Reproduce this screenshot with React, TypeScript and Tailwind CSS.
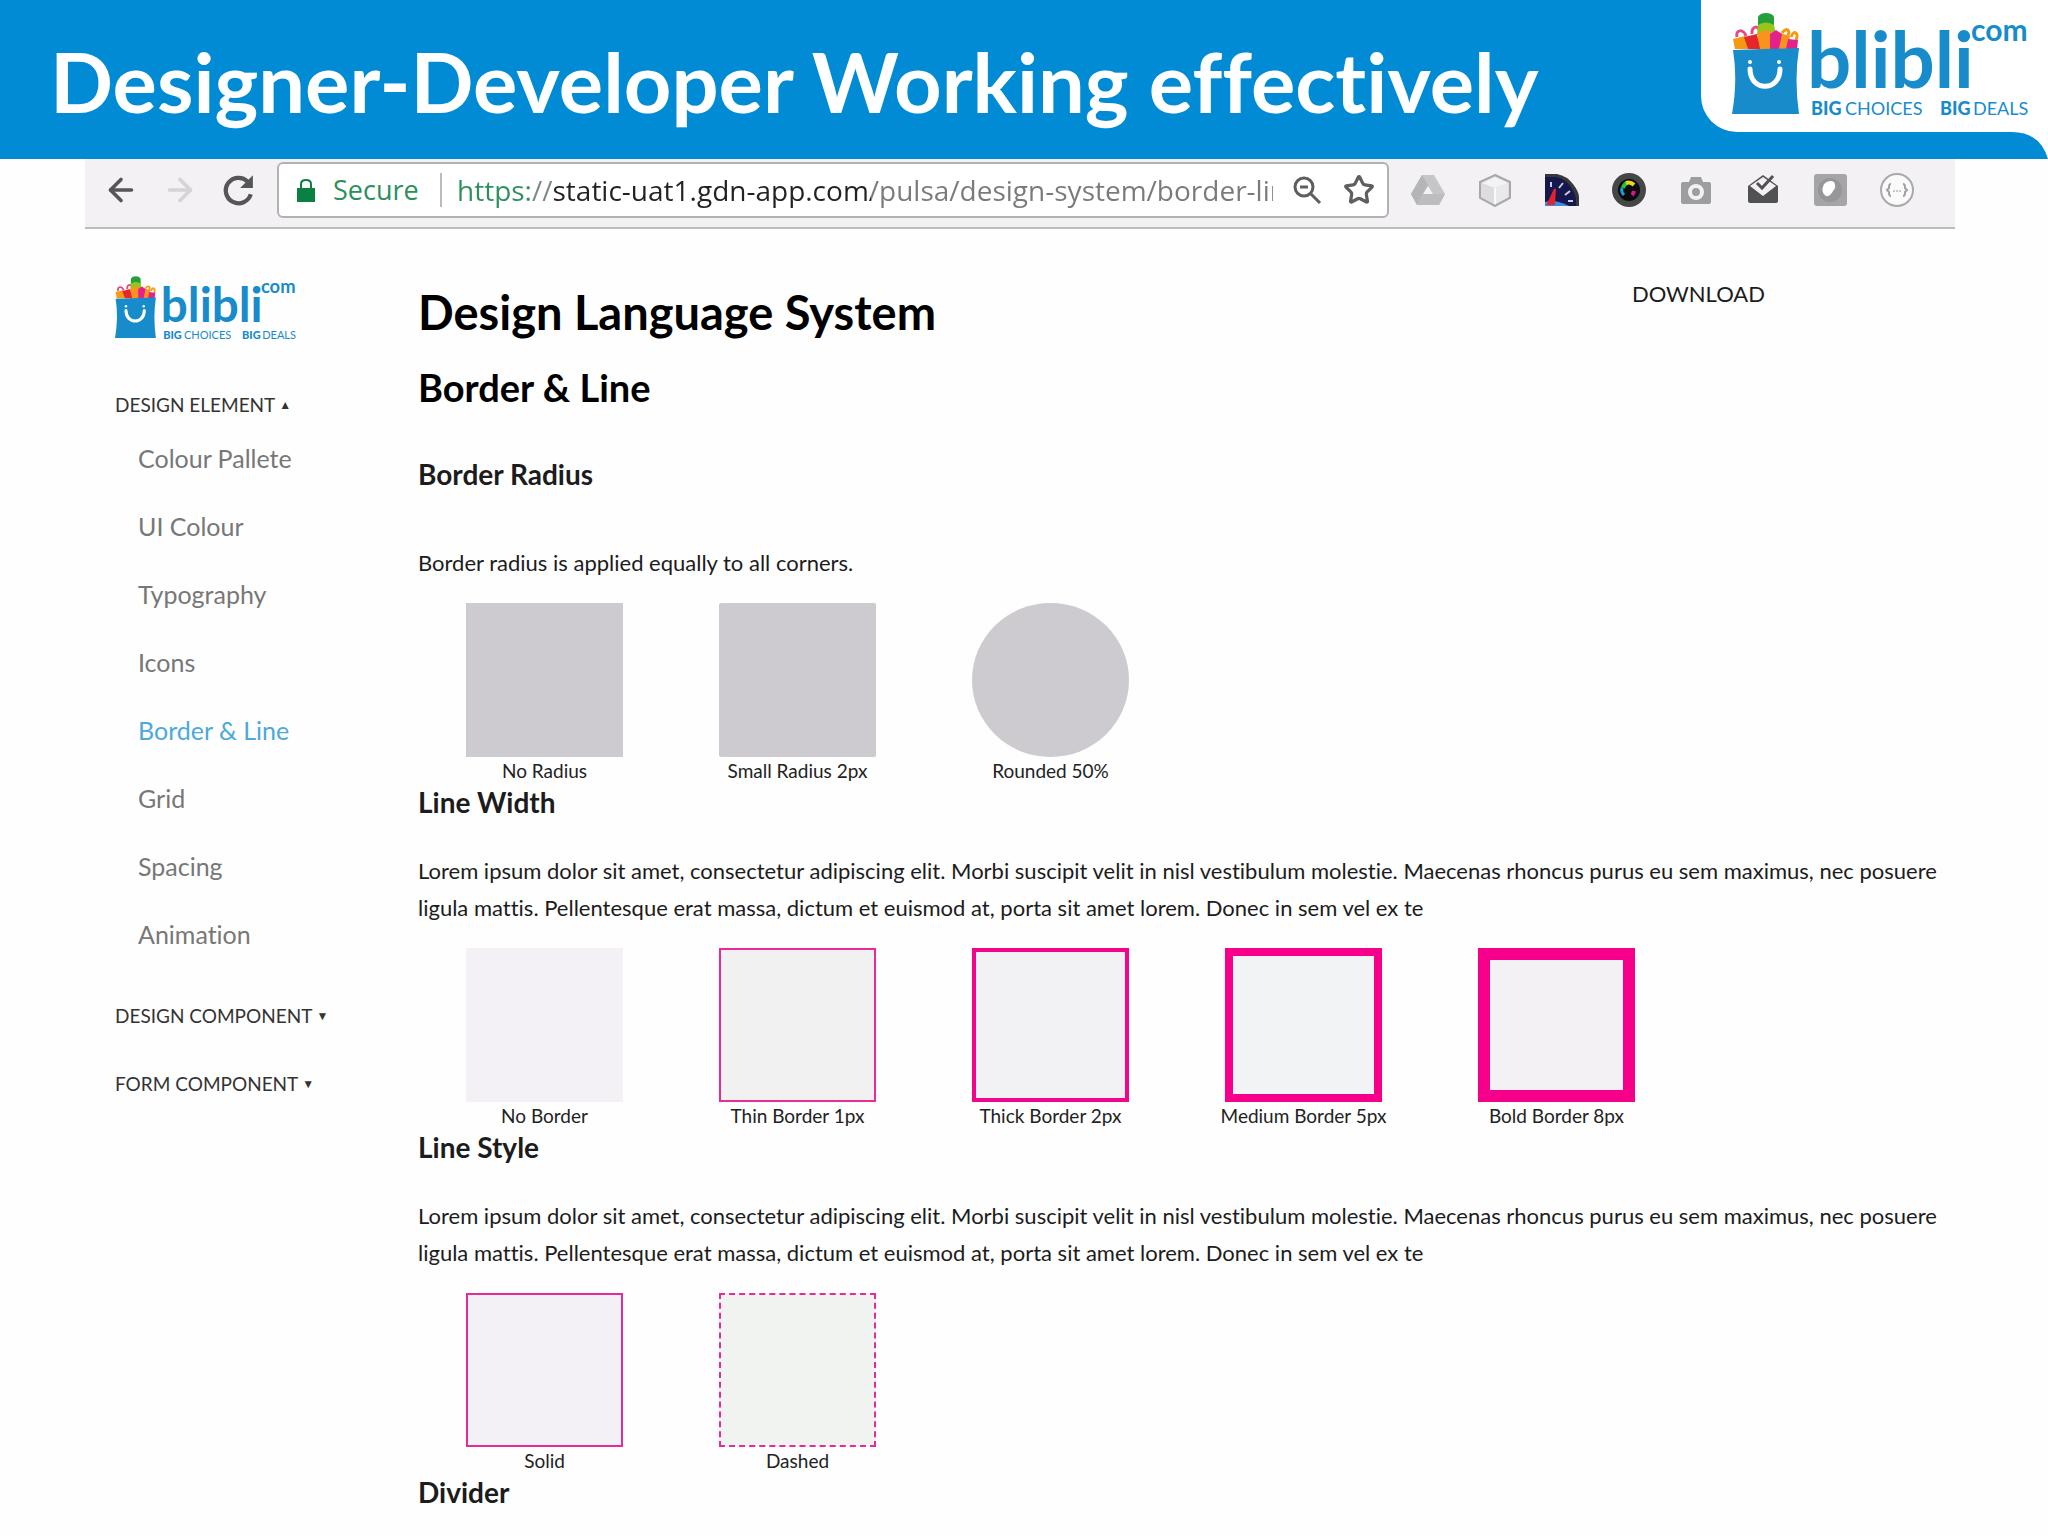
import { ArrowLeft, ArrowRight, Star } from "lucide-react";

const designElements = [
  "Colour Pallete",
  "UI Colour",
  "Typography",
  "Icons",
  "Border & Line",
  "Grid",
  "Spacing",
  "Animation",
];

const lorem =
  "Lorem ipsum dolor sit amet, consectetur adipiscing elit. Morbi suscipit velit in nisl vestibulum molestie. Maecenas rhoncus purus eu sem maximus, nec posuere ligula mattis. Pellentesque erat massa, dictum et euismod at, porta sit amet lorem. Donec in sem vel ex te";

type Swatch = { label: string; box: string };

const radiusSwatches: Swatch[] = [
  { label: "No Radius", box: "bg-[#cdcbcf]" },
  { label: "Small Radius 2px", box: "rounded-[2px] bg-[#cdcbcf]" },
  { label: "Rounded 50%", box: "rounded-[50%] bg-[#cdcbcf]" },
];

const widthSwatches: Swatch[] = [
  { label: "No Border", box: "bg-[#f3f1f5]" },
  { label: "Thin Border 1px", box: "border-2 border-[#ea2a97] bg-[#f1f1f1]" },
  { label: "Thick Border 2px", box: "border-4 border-[#f2058b] bg-[#f2f1f4]" },
  { label: "Medium Border 5px", box: "border-8 border-[#f6008b] bg-[#f1f3f4]" },
  { label: "Bold Border 8px", box: "border-[12px] border-[#f6008b] bg-[#f3f1f3]" },
];

const styleSwatches: Swatch[] = [
  { label: "Solid", box: "border-2 border-[#e62a97] bg-[#f3f1f5]" },
  { label: "Dashed", box: "border-2 border-dashed border-[#e62a97] bg-[#f1f3f1]" },
];

function Logo({ className }: { className?: string }) {
  return (
    <svg viewBox="0 0 298 104" className={`overflow-visible ${className}`} role="img" aria-label="blibli.com">
      <path d="M5 24c-2-8 7-8 9-1M20 21c-1-9 8-9 8-1" fill="none" stroke="#e8477f" strokeWidth="3" />
      <path d="M50 20c5-7 9-2 5 4M59 24c3-8 8-4 5 3" fill="none" stroke="#f39a12" strokeWidth="3" />
      <path d="M26 16L26 4Q28 0 34 0T42 4V16z" fill="#23a03a" />
      <path d="M26 12q8-5 16 0l2 10H25z" fill="#9cc31c" />
      <path d="M1 26l12-3 3 13H3z" fill="#f39a12" />
      <path d="M26 20l8-3 8 4v16H26z" fill="#f7941d" />
      <path d="M12 24l13-3 3 15H16z" fill="#e5262b" />
      <path d="M48 20l10 3-2 13h-9z" fill="#f7941d" />
      <path d="M38 21l6-4 6 4-3 15H38z" fill="#e4238a" />
      <path d="M56 26l10 1-1 9H54z" fill="#e4238a" />
      <path d="M1 37L67 35Q62 67 67 101H0Q6 67 1 37z" fill="#188bcb" />
      <path d="M18 56c0 23 30 23 30 0" fill="none" stroke="#fff" strokeWidth="5" strokeLinecap="round" />
      <circle cx="18" cy="49" r="2" fill="#fff" />
      <circle cx="47" cy="49" r="2" fill="#fff" />
      <g fill="#188bcb" className="font-['Lato',sans-serif]">
        <text x="75" y="75" fontSize="78" fontWeight="700">blibli</text>
        <text x="239" y="28" fontSize="30" fontWeight="700">com</text>
        <text x="79" y="102" fontSize="18" fontWeight="900">BIG</text>
        <text x="113" y="102" fontSize="18">CHOICES</text>
        <text x="208" y="102" fontSize="18" fontWeight="900">BIG</text>
        <text x="241" y="102" fontSize="18">DEALS</text>
      </g>
    </svg>
  );
}

function SlideHeader() {
  return (
    <header className="flex h-[159px] items-stretch justify-between bg-[#028bd5]">
      <h1 className="pt-[31px] pl-[50px] text-[83px] leading-[100px] font-bold whitespace-nowrap text-white">
        Designer-Developer Working effectively
      </h1>
      <div className="relative w-[347px] shrink-0">
        <div className="h-[132px] rounded-bl-[36px] bg-white pt-[13px] pl-[31px]">
          <Logo className="h-[104px] w-[298px]" />
        </div>
        <svg viewBox="0 0 36 27" className="absolute right-0 bottom-0 h-[27px] w-[36px]" aria-hidden="true">
          <path d="M0 0H36V27Q28 0 0 0z" fill="#fff" />
        </svg>
      </div>
    </header>
  );
}

function ExtensionIcons() {
  return (
    <div className="flex items-center gap-[33px]">
      <button aria-label="Drive">
        <svg viewBox="0 0 34 34" className="size-[34px]">
          <path d="M11 2h12l11 19-6 11H6L0 21z" fill="#c6c5c7" />
          <path d="M11 2l6 10L6 32 0 21z" fill="#b5b4b6" />
          <path d="M12 21h22l-6 11H6z" fill="#bdbcbe" />
          <path d="M17 13l5 8H12z" fill="#f3f1f4" />
        </svg>
      </button>
      <button aria-label="Box">
        <svg viewBox="0 0 34 34" className="size-[34px]">
          <path d="M17 2l15 7v16l-15 8-15-8V9z" fill="#dddcde" stroke="#a8a7a9" strokeWidth="2" />
          <path d="M4 10l13-6 13 6-13 5z" fill="#f3f2f4" />
          <path d="M17 15l13-5v14l-13 7z" fill="#e9e8ea" />
          <path d="M17 15v16" stroke="#fafafa" strokeWidth="2" />
        </svg>
      </button>
      <button aria-label="Page speed">
        <svg viewBox="0 0 34 34" className="size-[34px]">
          <path d="M0 1H12Q22 3 28 11T34 24V33H0z" fill="#37383b" />
          <path d="M0 4H11Q20 6 25 13T31 26V33H0z" fill="#16174f" />
          <path d="M0 33V29q10-3 24 4z" fill="#3c8be0" />
          <path d="M6 9v5M14 15l4-5M20 22l5-4M23 28h5" stroke="#c9cae0" strokeWidth="2" />
          <path d="M3 31l7-15-1 15z" fill="#e4232f" stroke="#e4232f" strokeWidth="2" />
        </svg>
      </button>
      <button aria-label="Colour picker">
        <svg viewBox="0 0 34 34" className="size-[34px]">
          <circle cx="17" cy="17" r="17" fill="#454747" />
          <circle cx="17" cy="17" r="11" fill="#0b0b0d" />
          <path d="M11 15a7 7 0 0 1 4-5" fill="none" stroke="#25c43b" strokeWidth="4" />
          <path d="M14 10a8 8 0 0 1 8 2" fill="none" stroke="#e8d41b" strokeWidth="4" />
          <path d="M22 18a7 7 0 0 1-2 4" fill="none" stroke="#d4168a" strokeWidth="4" />
          <path d="M10 15a7 7 0 0 0 2 7" fill="none" stroke="#12a5d8" strokeWidth="3" />
        </svg>
      </button>
      <button aria-label="Screenshot">
        <svg viewBox="0 0 34 34" className="size-[34px]">
          <path d="M4 9h6l2-5h10l2 5h6q2 0 2 2v18q0 2-2 2H4q-2 0-2-2V11q0-2 2-2z" fill="#9d9c9e" />
          <circle cx="17" cy="19" r="6" fill="none" stroke="#f3f1f4" strokeWidth="4" />
        </svg>
      </button>
      <button aria-label="Inbox">
        <svg viewBox="0 0 34 34" className="size-[34px]">
          <path d="M2 13L17 2l15 11v15q0 2-2 2H4q-2 0-2-2z" fill="#515052" />
          <path d="M4 13l13-9 13 9-13 10z" fill="#f3f1f4" />
          <path d="M11 10l5 5L27 3" fill="none" stroke="#515052" strokeWidth="3" />
        </svg>
      </button>
      <button aria-label="Notes">
        <svg viewBox="0 0 34 34" className="size-[34px]">
          <rect x="1" y="1" width="33" height="32" rx="3" fill="#a5a4a6" />
          <circle cx="17" cy="17" r="12" fill="#979698" />
          <path d="M11 11q5-5 10-2 3 5-1 9-3 6-7 5-6-4-2-12z" fill="#fff" />
        </svg>
      </button>
      <button aria-label="Braces">
        <svg viewBox="0 0 34 34" className="size-[34px]">
          <circle cx="17" cy="17" r="16" fill="#fafafa" stroke="#a9a8aa" strokeWidth="2" />
          <path d="M11 11q-2 0-2 3v1l-2 2 2 2v1q0 3 2 3M23 11q2 0 2 3v1l2 2-2 2v1q0 3-2 3" fill="none" stroke="#a09fa1" strokeWidth="2" />
          <path d="M13 18h8" stroke="#c9c8ca" strokeWidth="2" strokeDasharray="2 1" />
        </svg>
      </button>
    </div>
  );
}

function BrowserBar() {
  return (
    <div className="mr-[93px] ml-[85px] flex h-[70px] items-start border-b-2 border-[#bdbbbe] bg-[#f3f1f4] pt-[3px]">
      <div className="flex h-[56px] w-[192px] shrink-0 items-center gap-[23px] pl-[18px]">
        <button aria-label="Back">
          <ArrowLeft className="size-9 text-[#565557]" strokeWidth={2.4} />
        </button>
        <button aria-label="Forward">
          <ArrowRight className="size-9 text-[#d5d3d6]" strokeWidth={2.4} />
        </button>
        <button aria-label="Reload">
          <svg viewBox="0 0 32 32" className="size-[34px]">
            <path d="M28 20A12 12 0 1 1 25 8" fill="none" stroke="#565557" strokeWidth="4" />
            <path d="M30 2v12H18z" fill="#565557" />
          </svg>
        </button>
      </div>
      <div className="flex h-[56px] w-[1112px] shrink-0 items-center rounded-[6px] border-2 border-[#b3b1b4] bg-white pl-[18px] font-['Open_Sans','Noto_Sans',sans-serif] text-[27px]">
        <svg viewBox="0 0 18 24" className="h-[24px] w-[18px]" aria-hidden="true">
          <path d="M4 11V6q0-4 5-4t5 4v5" fill="none" stroke="#0b8043" strokeWidth="2" />
          <path d="M0 10h18v14H0z" fill="#0b8043" />
        </svg>
        <span className="ml-[18px] w-[88px] text-[#2d8f5b]">Secure</span>
        <span className="ml-[19px] h-[34px] w-[2px] bg-[#bdbbbe]" />
        <input
          aria-label="Address"
          defaultValue="https://static-uat1.gdn-app.com/pulsa/design-system/border-line"
          className="ml-[15px] w-[816px] bg-[linear-gradient(90deg,#2d8f5b_0_75px,#7b8a80_75px_97px,#222_97px_414px,#7a797b_414px)] bg-clip-text text-[28px] text-transparent outline-none"
        />
        <button aria-label="Zoom" className="ml-[18px]">
          <svg viewBox="0 0 32 32" className="size-8" fill="none" stroke="#5f5e60" strokeWidth="3">
            <circle cx="13" cy="13" r="9" />
            <path d="M20 20l9 9M9 13h8" />
          </svg>
        </button>
        <button aria-label="Bookmark" className="ml-[20px]">
          <Star className="size-8 text-[#5f5e60]" strokeWidth={2.4} />
        </button>
      </div>
      <div className="flex h-[56px] items-center pl-[22px]">
        <ExtensionIcons />
      </div>
    </div>
  );
}

function Sidebar() {
  return (
    <aside className="w-[333px] shrink-0 pt-[47px] pl-[30px]">
      <a href="#home" className="block w-[182px]">
        <Logo className="h-[64px] w-[182px]" />
      </a>
      <nav className="mt-[50px] flex flex-col items-start text-[19px] leading-[30px] text-[#333]">
        <button className="flex items-center gap-1">
          DESIGN ELEMENT <span className="text-[12px]">▲</span>
        </button>
        <ul className="mt-[4px] pl-[23px] text-[25px] text-[#777]">
          {designElements.map((item) => (
            <li key={item}>
              <a
                href="#item"
                className={
                  item === "Border & Line"
                    ? "block leading-[68px] text-[#4ba9dc]"
                    : "block leading-[68px]"
                }
              >
                {item}
              </a>
            </li>
          ))}
        </ul>
        <button className="mt-[33px] flex items-center gap-1">
          DESIGN COMPONENT <span className="text-[12px]">▼</span>
        </button>
        <button className="mt-[38px] flex items-center gap-1">
          FORM COMPONENT <span className="text-[12px]">▼</span>
        </button>
      </nav>
    </aside>
  );
}

function SwatchRow({ swatches }: { swatches: Swatch[] }) {
  return (
    <div className="mt-[22px] flex gap-[96px] pl-[48px]">
      {swatches.map((swatch) => (
        <figure key={swatch.label} className="flex w-[157px] flex-col items-center">
          <div className={`h-[154px] w-full ${swatch.box}`} />
          <figcaption className="text-[19px] leading-[27px] whitespace-nowrap text-[#222]">
            {swatch.label}
          </figcaption>
        </figure>
      ))}
    </div>
  );
}

function SectionTitle({ children }: { children: string }) {
  return <h4 className="text-[28px] leading-9 font-bold text-[#1c1c1c]">{children}</h4>;
}

export default function App() {
  return (
    <div className="min-h-screen overflow-hidden bg-[#fefefe] font-['Lato',sans-serif] [font-variant-ligatures:none]">
      <SlideHeader />
      <BrowserBar />
      <div className="mr-[93px] ml-[85px] flex">
        <Sidebar />
        <main className="min-w-0 flex-1 pt-[53px] text-[22px] leading-[37px] text-[#1c1c1c]">
          <div className="flex items-start justify-between pr-[190px]">
            <h2 className="text-[47px] leading-[60px] font-bold text-black">Design Language System</h2>
            <a href="#download" className="text-[22px] leading-[24px]">DOWNLOAD</a>
          </div>
          <h3 className="mt-[22px] text-[38px] leading-[46px] font-bold text-black">Border &amp; Line</h3>
          <section className="mt-[46px]">
            <SectionTitle>Border Radius</SectionTitle>
            <p className="mt-[52px]">Border radius is applied equally to all corners.</p>
            <SwatchRow swatches={radiusSwatches} />
          </section>
          <section>
            <SectionTitle>Line Width</SectionTitle>
            <p className="mt-[32px]">{lorem}</p>
            <SwatchRow swatches={widthSwatches} />
          </section>
          <section>
            <SectionTitle>Line Style</SectionTitle>
            <p className="mt-[32px]">{lorem}</p>
            <SwatchRow swatches={styleSwatches} />
          </section>
          <section>
            <SectionTitle>Divider</SectionTitle>
          </section>
        </main>
      </div>
    </div>
  );
}
